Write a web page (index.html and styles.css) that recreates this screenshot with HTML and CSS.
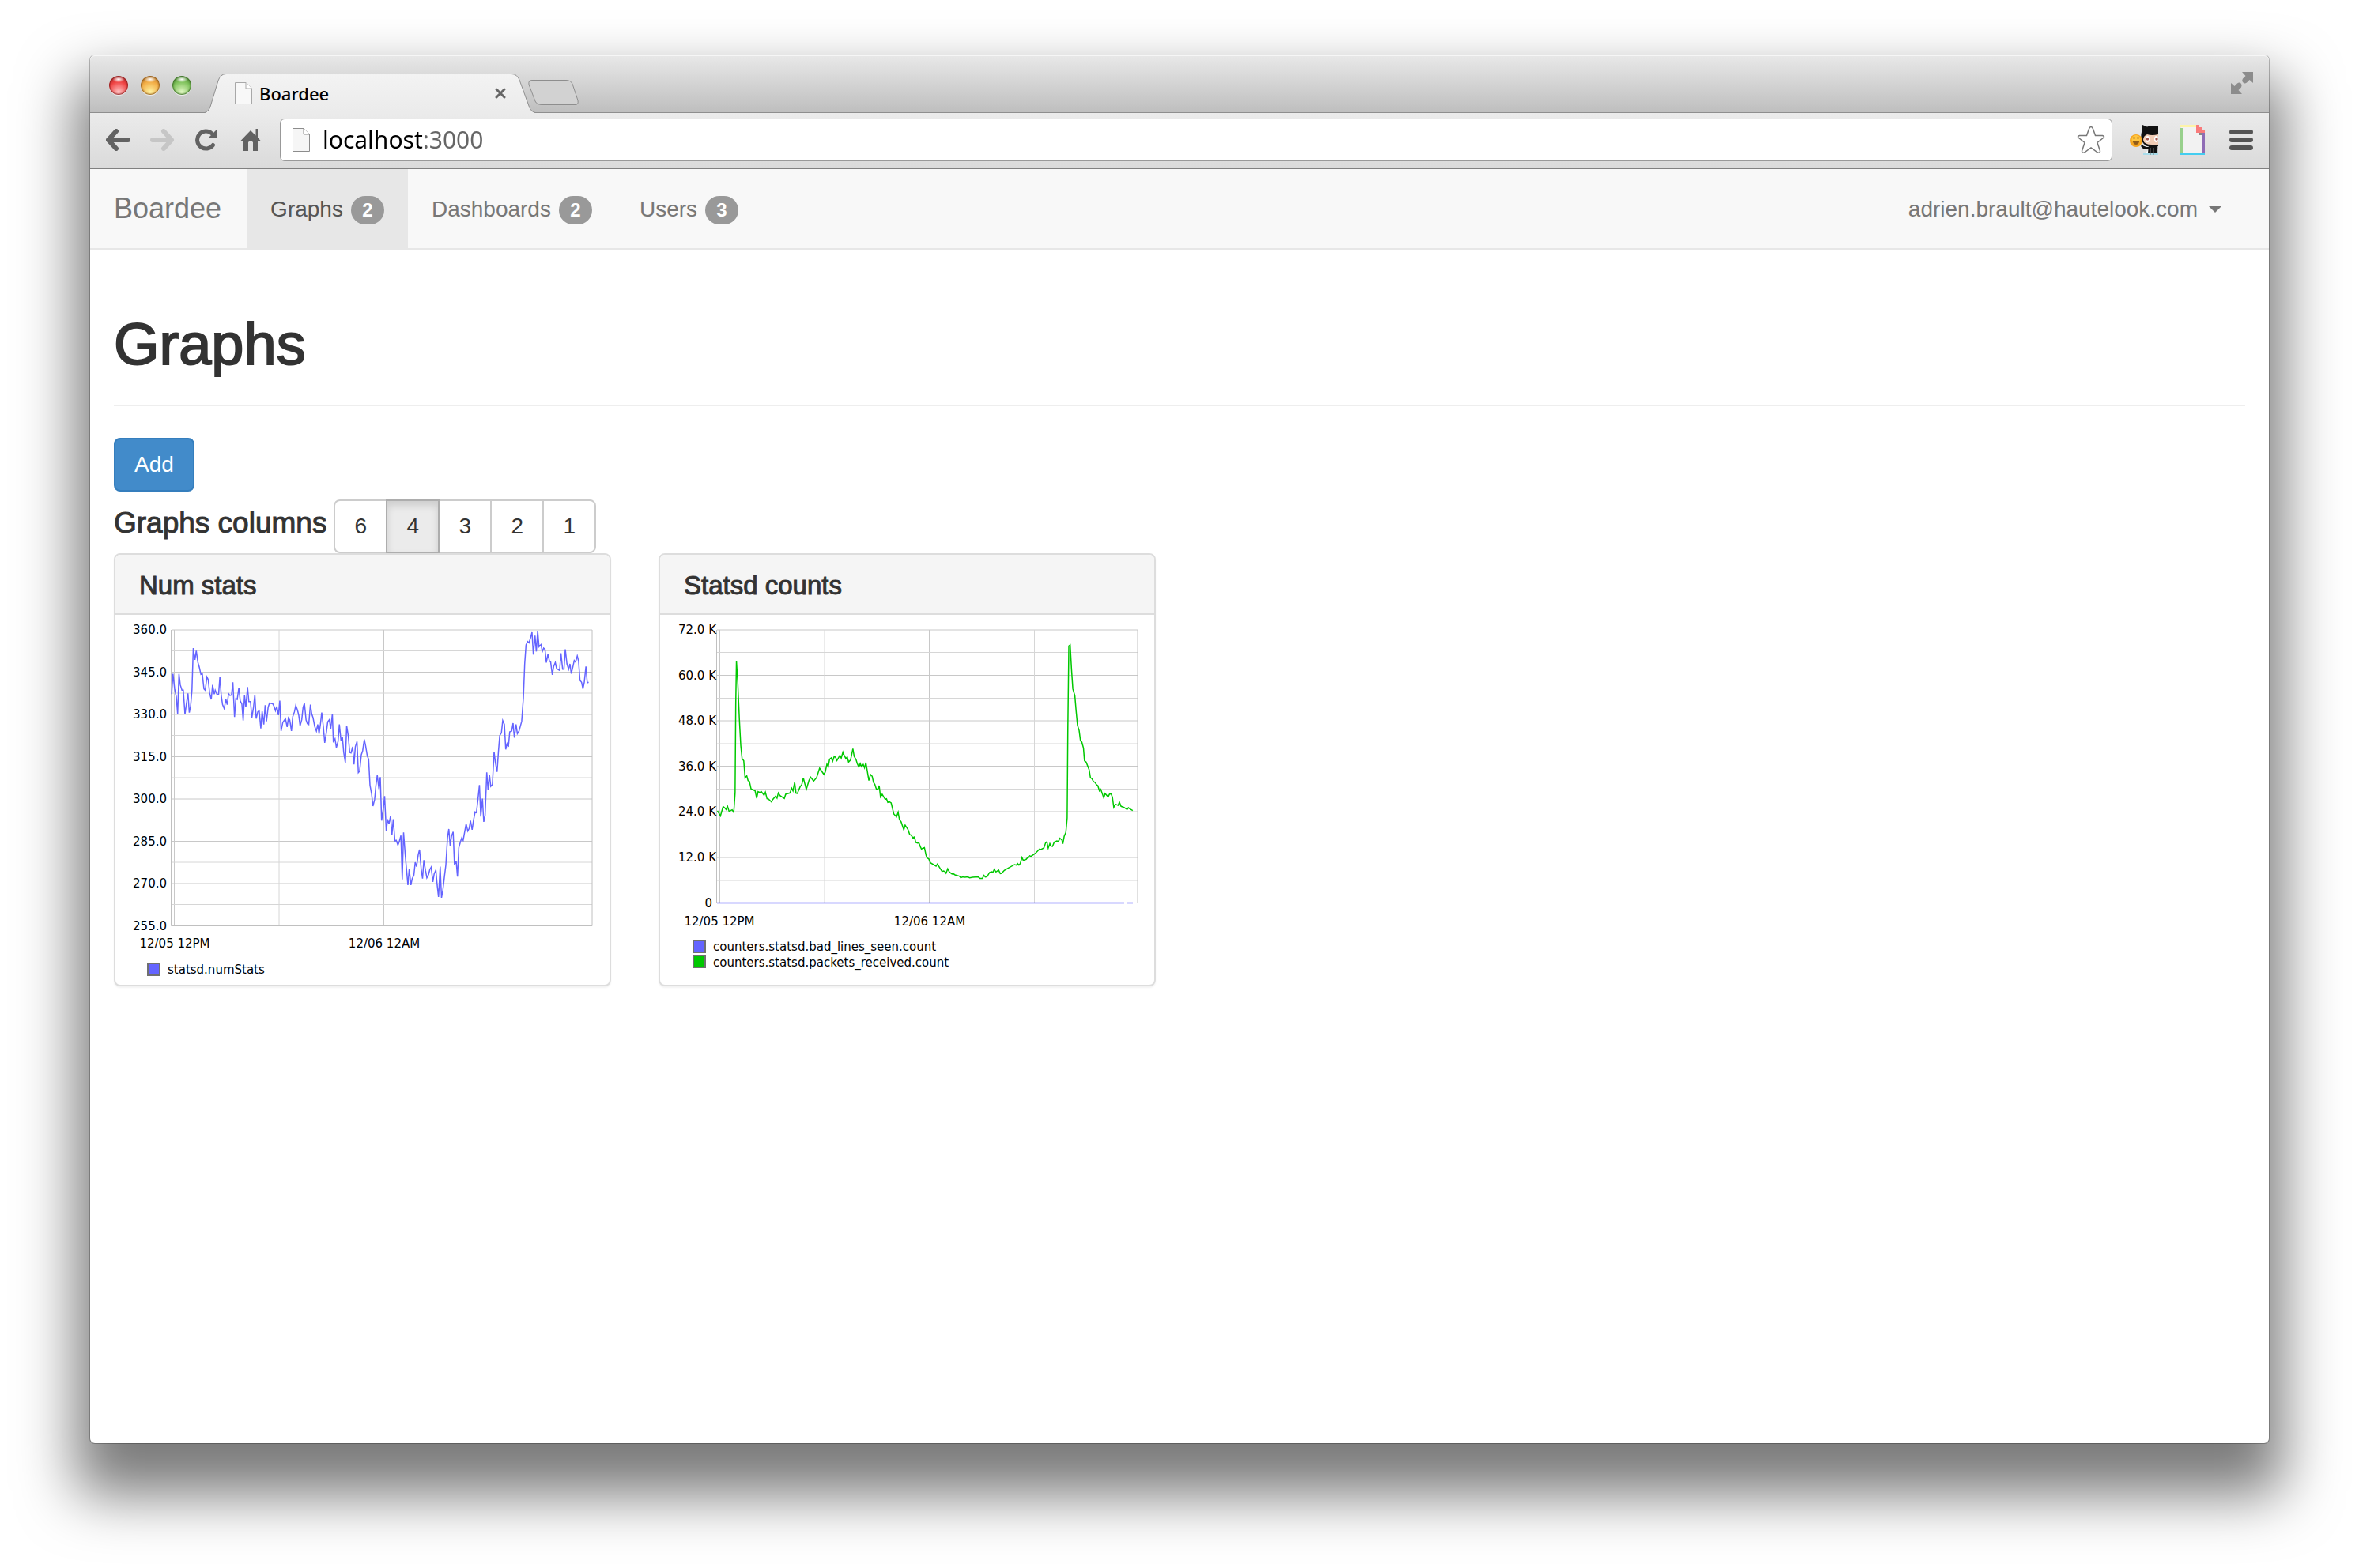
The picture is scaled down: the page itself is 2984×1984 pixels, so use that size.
FILE: index.html
```html
<!DOCTYPE html>
<html lang="en">
<head>
<meta charset="utf-8">
<title>Boardee</title>
<link rel="stylesheet" href="styles.css">
</head>
<body>
<div class="window">
  <header class="tabstrip">
    <div class="lights">
      <button class="light light-close" aria-label="Close window"></button>
      <button class="light light-min" aria-label="Minimize window"></button>
      <button class="light light-zoom" aria-label="Zoom window"></button>
    </div>
    <div class="tab">
      <svg class="tab-shape" viewBox="0 0 418 50" aria-hidden="true">
        <defs><linearGradient id="tabfill" x1="0" y1="0" x2="0" y2="1"><stop offset="0" stop-color="#f3f3f3"/><stop offset="1" stop-color="#ebebeb"/></linearGradient></defs>
        <path d="M0 50Q5 48 7 42L17 9Q20 .5 27 .5H388Q395 .5 398 8L410 41Q412 48 418 50Z" fill="url(#tabfill)"/>
        <path d="M0 49.500Q5 48 7 42L17 9Q20 .5 27 .5H388Q395 .5 398 8L410 41Q412 48 418 49.500" fill="none" stroke="#8e8e8e"/>
      </svg>
      <div class="tab-content">
        <svg class="tab-page" viewBox="0 0 22 28" aria-hidden="true"><path d="M.5.5H14L21.500 8V27.500H.5Z" fill="#f8f8f8" stroke="#a8a8a8"/><path d="M14 .5V8H21.500" fill="#fff" stroke="#a8a8a8"/></svg>
        <span class="tab-title">Boardee</span>
        <button class="tab-close" aria-label="Close tab"><svg viewBox="0 0 14 14"><path d="M2 2L12 12M12 2L2 12" stroke="#666" stroke-width="3" stroke-linecap="round"/></svg></button>
      </div>
    </div>
    <button class="newtab" aria-label="New tab"><svg viewBox="0 0 64 32"><path d="M5 .5H48Q54 .5 56 5L63 26Q64 31.500 60 31.500H17Q11 31.500 9 27L1 6Q0 .5 5 .5Z" fill="#d2d2d2" stroke="#8e8e8e"/></svg></button>
    <button class="fullscreen" aria-label="Full screen"><svg viewBox="0 0 28 28"><path d="M14 0H28V14L23.500 10L20 13.500Q17 15.500 15 13Q13.500 10.500 15 8.500L18.500 5ZM0 14L4.500 18L8 14.500Q11 12.500 13 15Q14.500 17.500 13 19.500L9.500 23L14 28H0Z" fill="#8c8c8c"/></svg></button>
  </header>
  <div class="toolbar">
    <button class="tool" aria-label="Back"><svg viewBox="0 0 32 28"><path d="M13 3L3 14L13 25M4 14H28" fill="none" stroke="#626262" stroke-width="6" stroke-linecap="round" stroke-linejoin="round"/></svg></button>
    <button class="tool" aria-label="Forward" disabled><svg viewBox="0 0 32 28"><path d="M18 3L28 14L18 25M27 14H4" fill="none" stroke="#c6c6c6" stroke-width="6" stroke-linecap="round" stroke-linejoin="round"/></svg></button>
    <button class="tool tool-reload" aria-label="Reload"><svg viewBox="0 0 28 28"><path d="M22.500 20.500A11 11 0 1 1 21 6" fill="none" stroke="#626262" stroke-width="5" stroke-linecap="round"/><path d="M28 0V12H16Z" fill="#626262"/></svg></button>
    <button class="tool tool-home" aria-label="Home"><svg viewBox="0 0 26 28"><path d="M13 2L19.500 8.500V0H22V11L26 15.500H22V28H16V17Q13 13 10 17V28H4V15.500H0Z" fill="#626262"/></svg></button>
    <div class="omnibox">
      <svg class="url-page" viewBox="0 0 22 30" aria-hidden="true"><path d="M.5.5H14L21.500 8V29.500H.5Z" fill="#f6f6f6" stroke="#8c8c8c"/><path d="M14 .5V8H21.500" fill="#fff" stroke="#8c8c8c"/></svg>
      <input class="url" type="text" value="localhost:3000" aria-label="Address" spellcheck="false">
      <button class="star" aria-label="Bookmark this page"><svg viewBox="0 0 36 36"><path d="M18 1.500Q19.500 1.500 20.500 4L23.500 12.500H32.500Q36 13.500 33.500 15.500L26 21.500L29.500 32Q29.500 35 26.500 34L18 28L9.500 34Q6.500 35 6.500 32L10 21.500L2.500 15.500Q0 13.500 3.500 12.500H12.500L15.500 4Q16.500 1.500 18 1.500Z" fill="#fff" stroke="#777" stroke-width="1.500"/></svg></button>
    </div>
    <button class="ext ext-cat" aria-label="GitHub emoji"><svg viewBox="0 0 36 38">
      <path d="M18 38H36V31H24Z" fill="#fff"/><path d="M15 26Q18 31 24 29M24 38L25 28H34V38" fill="#111" stroke="#111" stroke-width="2.500"/>
      <path d="M16 0L22 2.500Q29 0 36 2V27H22Q12 22 15 9Z" fill="#111"/><path d="M36 12Q28 14 22 12Q17 14 17 19Q18 25 28 25H36Z" fill="#f2cdb6"/>
      <ellipse cx="22.500" cy="18" rx="2.500" ry="4" fill="#fff"/><ellipse cx="33.500" cy="18" rx="2.500" ry="4" fill="#fff"/><circle cx="22.500" cy="18" r="1.700" fill="#a5564e"/><circle cx="34" cy="18" r="1.700" fill="#a5564e"/>
      <path d="M17 37H36" stroke="#a8dcea" stroke-width="2"/><path d="M26 29V38M30 29V38" stroke="#777"/>
      <circle cx="8" cy="20" r="8" fill="#f6a51f"/><circle cx="8" cy="18.500" r="5.500" fill="#ffc640"/><path d="M3.500 20.500H12.500Q11 25 8 25T3.500 20.500Z" fill="#925c18"/><path d="M5.500 15V18M10.500 15V18" stroke="#925c18" stroke-width="1.500"/>
    </svg></button>
    <button class="ext ext-note" aria-label="Notes"><svg viewBox="0 0 32 38"><path d="M2 3H28V35H2Z" fill="#f2f2f2"/><path d="M0 4H4V35H0Z" fill="#98d08c"/><path d="M0 0H21V3H0Z" fill="#fdf3a8"/><path d="M28 10H32V35H28Z" fill="#8f6cb5"/><path d="M0 35H32V38H0Z" fill="#44cdf0"/><path d="M21 0H24V3H28V6H32V10H21Z" fill="#f97b7b"/><path d="M25 10H29V13H25Z" fill="#888"/></svg></button>
    <button class="ext ext-menu" aria-label="Menu"><svg viewBox="0 0 30 26"><path d="M3 3H27M3 13H27M3 23H27" stroke="#555" stroke-width="6" stroke-linecap="round"/></svg></button>
  </div>

  <nav class="navbar">
    <a class="brand" href="#">Boardee</a>
    <ul class="nav">
      <li><a class="nav-link active" href="#graphs">Graphs <span class="badge">2</span></a></li>
      <li><a class="nav-link" href="#dashboards">Dashboards <span class="badge">2</span></a></li>
      <li><a class="nav-link" href="#users">Users <span class="badge">3</span></a></li>
    </ul>
    <a class="nav-link account" href="#account">adrien.brault@hautelook.com <span class="caret"></span></a>
  </nav>

  <main class="page">
    <h1 class="page-title">Graphs</h1>
    <button class="btn-add">Add</button>
    <div class="columns-bar">
      <h2 class="columns-label" id="cols">Graphs columns</h2>
      <div class="btn-group" role="group" aria-labelledby="cols">
        <button class="btn">6</button><button class="btn btn-active" aria-pressed="true">4</button><button class="btn">3</button><button class="btn">2</button><button class="btn">1</button>
      </div>
    </div>

    <div class="panels">
      <section class="panel">
        <h3 class="panel-title">Num stats</h3>
        <svg class="chart" viewBox="0 0 625 468" role="img" aria-label="Num stats graph">
          <path class="grid-major" d="M71 19H603M71 72.500H603M71 126H603M71 179.500H603M71 233H603M71 286.500H603M71 340H603M71 393.500H603M74.500 19V393M339.500 19V393"/>
          <path class="grid-minor" d="M71 45.500H603M71 99H603M71 152.500H603M71 206H603M71 259.500H603M71 313H603M71 366.500H603M207 19V393M472.500 19V393"/>
          <path class="frame" d="M70.500 19V393.500H603V19"/>
          <g transform="translate(-16 -88) scale(.4209 .3333)">
            <polyline class="series series-blue" points="207,565 211,488 216,545 221,575 225,640 229,488 233,530 238,550 242,550 247,642 251,605 256,562 260,635 264,610 268,550 272,390 277,435 281,400 286,445 290,462 295,490 299,487 304,545 308,550 313,500 317,510 321,560 326,585 330,530 335,565 338,550 343,565 348,566 352,500 356,570 360,605 365,620 370,585 374,605 378,563 382,570 387,568 391,520 396,652 400,582 404,585 409,540 413,590 418,603 422,665 426,570 430,615 435,538 439,593 444,593 448,655 453,615 457,567 461,658 466,632 470,628 475,695 479,630 484,680 488,607 492,668 497,615 501,599 506,600 511,602 515,612 519,628 523,612 528,645 532,590 536,705 541,672 549,658 554,690 558,655 562,663 567,705 571,650 576,632 580,608 585,625 589,645 593,685 598,662 602,615 606,600 611,663 615,677 619,680 624,605 628,640 632,655 637,688 642,705 646,680 650,715 654,680 658,635 663,690 667,750 672,710 676,670 681,662 685,697 690,640 693,748 698,735 702,768 707,745 711,680 716,742 720,727 724,785 729,825 733,685 738,725 742,786 746,788 751,765 755,832 759,765 764,745 768,863 772,857 777,795 781,780 786,737 790,762 795,800 799,812 803,910 808,945 812,990 817,965 821,910 825,873 830,925 834,880 838,1045 843,1000 847,952 852,1085 856,1040 860,1058 865,1027 869,1100 873,1040 878,1122 882,1120 887,1138 891,1125 896,1102 900,1268 904,1090 909,1175 917,1290 921,1228 926,1290 930,1265 935,1252 939,1203 943,1220 948,1175 952,1155 957,1230 961,1265 965,1195 970,1235 974,1262 979,1250 983,1230 987,1222 992,1278 996,1247 1001,1233 1005,1290 1009,1335 1014,1220 1018,1338 1022,1310 1027,1255 1031,1215 1036,1110 1040,1077 1044,1140 1048,1105 1053,1088 1057,1213 1062,1198 1066,1258 1070,1148 1075,1125 1079,1110 1083,1120 1092,1057 1097,1085 1101,1075 1105,1045 1110,1080 1114,1045 1119,1012 1123,1015 1127,970 1132,910 1136,1030 1141,962 1145,1050 1149,1025 1154,862 1158,930 1162,870 1166,915 1171,908 1176,783 1180,825 1185,860 1189,785 1193,722 1198,712 1202,665 1207,680 1211,775 1215,753 1219,765 1223,708 1229,705 1233,675 1237,730 1242,680 1246,715 1251,705 1259,668 1264,580 1268,450 1272,378 1277,365 1281,370 1286,350 1290,330 1294,415 1299,343 1303,403 1307,325 1311,385 1317,377 1321,403 1325,390 1329,395 1333,445 1338,412 1342,438 1346,443 1351,492 1355,460 1360,445 1364,468 1373,475 1377,410 1382,470 1386,470 1390,395 1395,450 1400,470 1404,450 1408,487 1413,460 1417,437 1421,443 1426,420 1430,440 1434,512 1439,520 1443,545 1447,520 1452,460 1456,522 1460,520"/>
          </g>
          <g class="labels labels-y">
            <text x="65" y="24">360.0</text><text x="65" y="78">345.0</text><text x="65" y="131">330.0</text><text x="65" y="185">315.0</text><text x="65" y="238">300.0</text><text x="65" y="292">285.0</text><text x="65" y="345">270.0</text><text x="65" y="399">255.0</text>
          </g>
          <g class="labels labels-x"><text x="75" y="421">12/05 12PM</text><text x="340" y="421">12/06 12AM</text></g>
          <rect class="swatch series-fill-blue" x="41" y="441" width="15" height="15"/>
          <text class="labels" x="66" y="454">statsd.numStats</text>
        </svg>
      </section>
      <section class="panel">
        <h3 class="panel-title">Statsd counts</h3>
        <svg class="chart" viewBox="0 0 625 468" role="img" aria-label="Statsd counts graph">
          <path class="grid-major" d="M72 19H604M72 76.500H604M72 134H604M72 191.500H604M72 249H604M72 307H604M75.500 19V364M340.500 19V364"/>
          <path class="grid-minor" d="M72 47.500H604M72 105.500H604M72 163H604M72 220.500H604M72 278.500H604M72 336H604M208 19V364M473.500 19V364"/>
          <path class="frame" d="M71.500 19V364.500H604V19"/>
          <path class="series series-blue" d="M72 364.500H587M591 364.500H598"/>
          <g transform="translate(-15 -88) scale(.4209 .3333)">
            <polyline class="series series-green" points="208,1008 217,1027 225,992 230,997 234,1003 238,990 243,1010 252,1004 257,1014 261,940 263,600 265,440 269,520 274,665 278,760 282,810 287,818 291,883 296,875 300,893 304,896 309,925 321,932 326,960 330,935 335,938 340,935 348,949 352,937 357,962 361,963 370,974 374,965 383,952 387,960 391,940 396,950 409,961 413,945 418,943 426,940 431,922 435,932 440,900 444,941 448,942 457,915 461,910 466,883 475,927 483,893 488,880 497,895 506,882 515,846 528,870 532,860 537,830 541,840 545,812 550,807 554,820 559,801 563,805 567,817 576,797 580,808 585,785 589,798 594,810 598,803 602,823 608,815 615,772 619,802 624,812 628,828 633,842 637,828 641,840 646,832 650,845 654,825 663,893 668,870 673,877 677,900 681,908 686,927 691,924 694,912 698,955 703,945 712,964 716,962 720,976 725,974 730,978 738,1020 746,1031 751,1013 755,1042 760,1050 768,1080 772,1062 781,1080 786,1099 790,1100 795,1110 800,1107 804,1128 809,1130 813,1128 817,1142 821,1153 826,1150 830,1148 835,1177 838,1187 843,1190 848,1205 865,1218 869,1210 883,1238 887,1236 891,1238 895,1245 900,1228 905,1240 913,1248 917,1247 922,1251 935,1256 939,1262 945,1259 952,1260 960,1259 966,1262 975,1260 992,1259 997,1265 1004,1265 1009,1253 1013,1259 1018,1258 1026,1242 1032,1239 1036,1241 1040,1230 1045,1240 1053,1233 1058,1246 1062,1245 1070,1234 1080,1227 1101,1212 1106,1214 1110,1208 1114,1214 1118,1208 1123,1185 1127,1196 1136,1192 1145,1178 1150,1181 1163,1170 1176,1153 1180,1155 1189,1149 1194,1130 1198,1125 1202,1150 1207,1132 1211,1142 1215,1143 1220,1127 1228,1122 1233,1124 1237,1112 1243,1118 1246,1133 1250,1105 1255,1090 1259,1035 1261,700 1264,382 1268,378 1272,470 1276,545 1282,570 1286,630 1290,683 1295,703 1299,742 1303,747 1308,770 1311,818 1316,823 1325,852 1329,883 1333,885 1338,897 1343,900 1347,909 1351,912 1356,932 1360,926 1369,959 1373,942 1382,955 1386,945 1391,943 1395,957 1399,995 1404,983 1412,987 1416,975 1421,991 1430,995 1439,1003 1443,996 1448,1001 1456,1007"/>
          </g>
          <g class="labels labels-y">
            <text x="71" y="24">72.0 K</text><text x="71" y="82">60.0 K</text><text x="71" y="139">48.0 K</text><text x="71" y="197">36.0 K</text><text x="71" y="254">24.0 K</text><text x="71" y="312">12.0 K</text><text x="66" y="370">0</text>
          </g>
          <g class="labels labels-x"><text x="75" y="393">12/05 12PM</text><text x="341" y="393">12/06 12AM</text></g>
          <rect class="swatch series-fill-blue" x="42" y="412" width="15" height="15"/>
          <rect class="swatch series-fill-green" x="42" y="431" width="15" height="15"/>
          <text class="labels" x="67" y="425">counters.statsd.bad_lines_seen.count</text>
          <text class="labels" x="67" y="445">counters.statsd.packets_received.count</text>
        </svg>
      </section>
    </div>
  </main>
</div>
</body>
</html>
```

FILE: styles.css
```css
* { box-sizing: border-box; }

body {
  margin: 0;
  padding: 70px 114px 158px;
  background: #fff;
  color: #333;
  font-family: "Liberation Sans", Arial, sans-serif;
  font-size: 28px;
  line-height: 40px;
}

button {
  padding: 0;
  border: 0;
  background: none;
  color: inherit;
  font: inherit;
}

svg { display: block; }
a { color: inherit; text-decoration: none; }

.window {
  min-height: calc(100vh - 228px);
  background: #fff;
  border-radius: 6px;
  box-shadow: 0 0 0 1px rgba(0, 0, 0, .25), 0 48px 72px 18px rgba(0, 0, 0, .52);
}

/* Browser chrome */
.tabstrip {
  display: flex;
  align-items: flex-end;
  height: 73px;
  padding: 0 20px 0 24px;
  border-radius: 6px 6px 0 0;
  background: linear-gradient(#e8e8e8, #bebebe);
  box-shadow: inset 0 1px #f6f6f6, inset 0 -1px #8e8e8e;
}

.lights {
  display: flex;
  gap: 16px;
  margin: 0 17px 23px 0;
}

.light {
  width: 24px;
  height: 24px;
  border-radius: 50%;
}

.light-close { background: radial-gradient(ellipse 8px 4px at 50% 18%, #fff, transparent), radial-gradient(circle at 50% 85%, #ffc4c4, #f04343 55%, #8c1a1a 100%); box-shadow: inset 0 0 2px 1px #8a1f1f, 0 1px #eee; }
.light-min { background: radial-gradient(ellipse 8px 4px at 50% 18%, #fff, transparent), radial-gradient(circle at 50% 85%, #fff3a0, #f2ac45 55%, #93571a 100%); box-shadow: inset 0 0 2px 1px #8f5a1b, 0 1px #eee; }
.light-zoom { background: radial-gradient(ellipse 8px 4px at 50% 18%, #fff, transparent), radial-gradient(circle at 50% 85%, #e2f8c4, #7fc25c 55%, #33681f 100%); box-shadow: inset 0 0 2px 1px #3b6d26, 0 1px #eee; }

.tab {
  display: grid;
  width: 418px;
  height: 50px;
}

.tab-shape, .tab-content { grid-area: 1 / 1; }

.tab-content {
  display: flex;
  align-items: center;
  padding: 0 37px 0 38px;
}

.tab-page { width: 22px; height: 28px; }

.tab-title {
  flex: 1;
  margin-left: 9px;
  color: #000;
  font: 500 22px/28px "Noto Sans", sans-serif;
}

.tab-close svg { width: 14px; height: 14px; }

.newtab { margin: 0 0 10px -9px; }
.newtab svg { width: 64px; height: 32px; }
.fullscreen { margin: 0 0 24px auto; }
.fullscreen svg { width: 28px; height: 28px; }

.toolbar {
  display: flex;
  align-items: center;
  height: 71px;
  padding: 0 20px 2px;
  border-bottom: 1px solid #808080;
  background: linear-gradient(#ebebeb, #dadada);
}

.tool svg { width: 32px; height: 28px; }
.tool + .tool { margin-left: 23px; }
.tool-reload svg { width: 28px; }
.tool + .tool-reload { margin-left: 26px; }
.tool-home svg { width: 26px; }
.tool + .tool-home { margin-left: 29px; }

.omnibox {
  display: flex;
  flex: 1;
  align-items: center;
  height: 54px;
  margin-left: 24px;
  padding: 0 8px 0 15px;
  border: 1px solid #999;
  border-radius: 6px;
  background: #fff;
}

.url-page { width: 22px; height: 30px; }

.url {
  flex: 1;
  margin-left: 16px;
  padding: 0;
  border: 0;
  outline: 0;
  background: linear-gradient(90deg, #000 127px, #666 127px);
  -webkit-background-clip: text;
  background-clip: text;
  color: transparent;
  font: 30px/40px "Noto Sans", sans-serif;
}

.star svg { width: 36px; height: 36px; }
.ext-cat { margin-left: 22px; }
.ext-cat svg { width: 36px; height: 38px; }
.ext-note { margin-left: 27px; }
.ext-note svg { width: 32px; height: 38px; }
.ext-menu { margin-left: 31px; }
.ext-menu svg { width: 30px; height: 26px; }

/* Application navigation */
.navbar {
  display: flex;
  padding: 0 30px;
  border-bottom: 2px solid #e7e7e7;
  background: #f8f8f8;
  color: #777;
}

.brand {
  padding: 30px 32px 30px 0;
  font-size: 36px;
}

.nav {
  display: flex;
  margin: 0;
  padding: 0;
  list-style: none;
}

.nav-link {
  display: flex;
  align-items: center;
  gap: 10px;
  height: 100px;
  padding: 2px 30px 0;
}

.nav-link.active { background: #e7e7e7; color: #555; }

.badge {
  min-width: 42px;
  height: 36px;
  margin-top: 2px;
  border-radius: 18px;
  background: #999;
  color: #fff;
  font-size: 24px;
  font-weight: bold;
  line-height: 36px;
  text-align: center;
}

.account { gap: 14px; margin-left: auto; }

.caret {
  border: 8px solid transparent;
  border-top-color: #777;
  border-bottom: 0;
}

/* Page */
.page { padding: 80px 30px 60px; }

.page-title {
  margin: 0 0 40px;
  padding-bottom: 36px;
  border-bottom: 2px solid #eee;
  font-size: 74px;
  font-weight: normal;
  line-height: 80px;
  -webkit-text-stroke: 2px #333;
}

.btn-add {
  display: block;
  height: 68px;
  padding: 0 24px;
  border: 2px solid #357ebd;
  border-radius: 8px;
  background: #428bca;
  color: #fff;
}

.columns-bar {
  display: flex;
  align-items: center;
  gap: 9px;
  margin-top: 10px;
}

.columns-label {
  margin: 0 0 8px;
  font-size: 37px;
  font-weight: normal;
  -webkit-text-stroke: 1px #333;
}

.btn-group { display: flex; }

.btn {
  width: 68px;
  height: 68px;
  border: 2px solid #ccc;
  background: #fff;
}

.btn + .btn { margin-left: -2px; }
.btn:first-child { border-radius: 8px 0 0 8px; }
.btn:last-child { border-radius: 0 8px 8px 0; }

.btn-active {
  z-index: 1;
  border-color: #adadad;
  background: #ebebeb;
  box-shadow: inset 0 6px 10px rgba(0, 0, 0, .125);
}

.panels {
  display: grid;
  grid-template-columns: repeat(4, 1fr);
  gap: 60px;
}

.panel {
  border: 2px solid #ddd;
  border-radius: 8px;
  background: #fff;
  box-shadow: 0 2px 2px rgba(0, 0, 0, .05);
}

.panel-title {
  margin: 0;
  padding: 19px 30px 15px;
  border-bottom: 2px solid #ddd;
  border-radius: 6px 6px 0 0;
  background: #f5f5f5;
  font-size: 33px;
  font-weight: normal;
  -webkit-text-stroke: 1px #333;
}

/* Charts */
.chart { width: 100%; height: auto; }
.grid-major { fill: none; stroke: #c8c8c8; stroke-width: 1; }
.grid-minor { fill: none; stroke: #d6d6d6; stroke-width: 1; }
.frame { fill: none; stroke: #c0c0c0; stroke-width: 1; }
.series { fill: none; stroke-width: 1.5; vector-effect: non-scaling-stroke; }
.series-blue { stroke: #6464ff; }
.series-green { stroke: #00c800; }
.series-fill-blue { fill: #6464ff; }
.series-fill-green { fill: #00c800; }
.swatch { stroke: #707070; stroke-width: 2; }
.labels { fill: #000; font: 15px "DejaVu Sans", sans-serif; }
.labels-y { text-anchor: end; }
.labels-x { text-anchor: middle; }
```
